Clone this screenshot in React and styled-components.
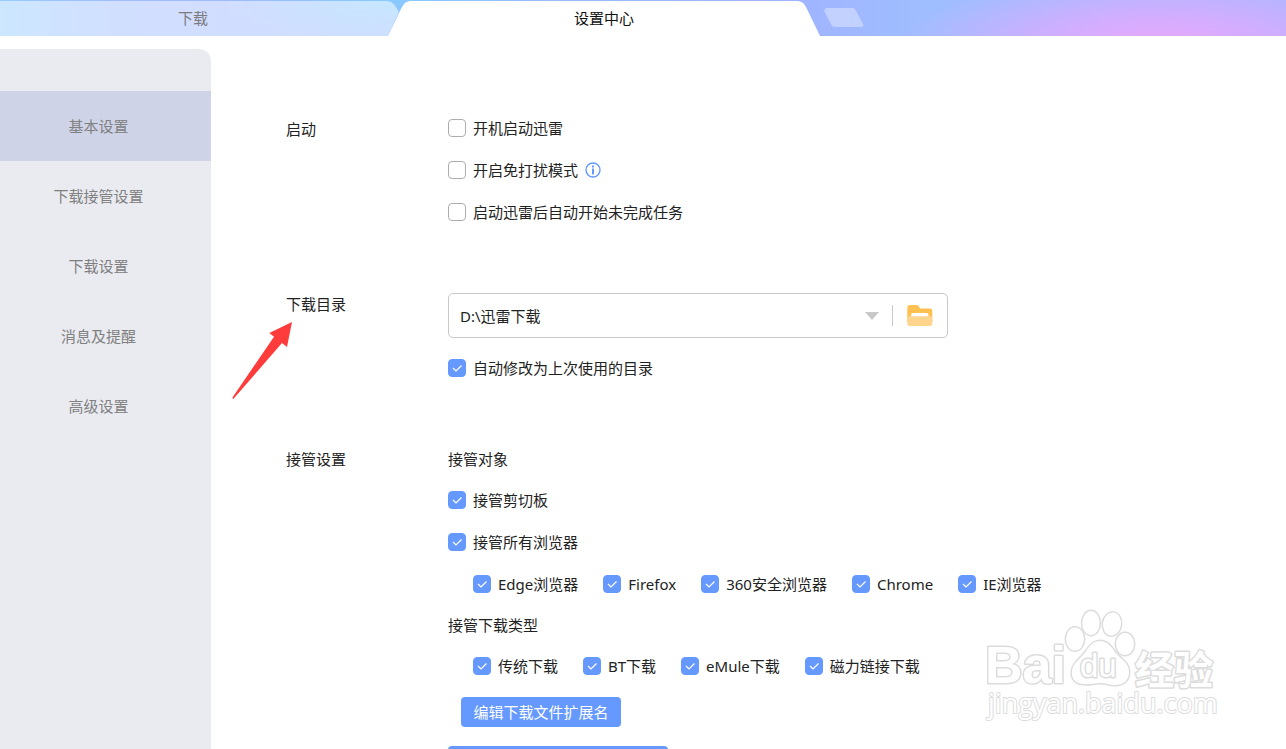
import styled, { createGlobalStyle } from "styled-components"

const sideItems = ['基本设置', '下载接管设置', '下载设置', '消息及提醒', '高级设置']
const browsers = ['Edge浏览器', 'Firefox', '360安全浏览器', 'Chrome', 'IE浏览器']
const downloadTypes = ['传统下载', 'BT下载', 'eMule下载', '磁力链接下载']

const CheckOption = ({ text, checked, children }) => (
    <CheckRow>
        <CheckLabel>
            <Checkbox type="checkbox" defaultChecked={checked} />
            {text}
        </CheckLabel>
        {children}
    </CheckRow>
)

const InfoIcon = () => (
    <svg width="16" height="16" viewBox="0 0 16 16" fill="none" stroke="#6699ff">
        <circle cx="8" cy="8" r="7" strokeWidth="1.4" />
        <path d="M8 6.600V12.400" strokeWidth="2" />
        <path d="M8 3.400V5.400" strokeWidth="2" />
    </svg>
)

const FolderIcon = () => (
    <svg width="26" height="22" viewBox="0 0 26 22">
        <path d="M3 0H9.500Q11 0 11.700 1.200L13.200 3.600H23Q25.300 3.600 25.300 6.200V17H0.300V3Q0.300 0 3 0Z" fill="#ffc052" />
        <path d="M4 14V10Q4 8 6 8H19.500Q21.500 8 21.500 10V14Z" fill="#fff" />
        <path d="M2.400 11.300H23.400Q25.300 11.300 25.300 13.400V18.600Q25.300 21 22.700 21H3.100Q0.300 21 0.300 18.600V13.400Q0.300 11.300 2.400 11.300Z" fill="#ffd48c" />
    </svg>
)

const Watermark = () => (
    <WatermarkBox viewBox="0 0 240 120" aria-hidden="true">
        <g fill="#fff" stroke="#dcdcdc" strokeWidth="3" paintOrder="stroke" strokeLinejoin="round">
            <text x="4" y="78" fontSize="52" fontWeight="700" fontFamily="Liberation Sans, sans-serif">Bai</text>
            <ellipse cx="94" cy="34" rx="9" ry="11.500" />
            <ellipse cx="110" cy="18" rx="8.700" ry="12" />
            <ellipse cx="131" cy="19" rx="9" ry="11.500" transform="rotate(8 131 19)" />
            <ellipse cx="144" cy="39" rx="9" ry="11" />
            <path d="M119 36C126 36 130 41 134 47C139 54 148 57 148 67C148 76 142 80 134 80C128 80 125 78 119 78C113 78 109 80 103 79C95 79 90 74 91 66C92 57 101 53 105 46C109 40 113 36 119 36Z" />
            <text x="99" y="72" fontSize="33" fontFamily="Liberation Sans, sans-serif">du</text>
            <text x="154" y="79" fontSize="39" fontWeight="700" fontFamily="Noto Sans CJK SC, sans-serif">经验</text>
            <text x="7" y="108" fontSize="27" strokeWidth="2" fontFamily="Open Sans, sans-serif">jingyan.baidu.com</text>
        </g>
    </WatermarkBox>
)

const App = () => {
    return (
        <Page>
            <GlobalStyle />
            <TabBar>
                <Tab>下载</Tab>
                <ActiveTab>设置中心</ActiveTab>
                <NewTab aria-label="新建标签">
                    <svg width="40" height="20" viewBox="0 0 40 20">
                        <path d="M3 0H28.500Q30.500 0 31.500 1.700L39 16Q40 19 37 19H10.500Q8.500 19 7.500 17.300L0.500 3.500Q-0.500 0.500 3 0Z" fill="#fff" fillOpacity="0.36" />
                    </svg>
                </NewTab>
            </TabBar>
            <Body>
                <Sidebar>
                    {sideItems.map((item, i) => (
                        <SideLink key={item} href="#" $active={i === 0}>{item}</SideLink>
                    ))}
                </Sidebar>
                <Content>
                    <Section>
                        <SectionTitle $height={44}>启动</SectionTitle>
                        <div>
                            <CheckOption text="开机启动迅雷" />
                            <CheckOption text="开启免打扰模式"><InfoIcon /></CheckOption>
                            <CheckOption text="启动迅雷后自动开始未完成任务" />
                        </div>
                    </Section>
                    <Section $gap={60}>
                        <SectionTitle $height={22}>下载目录</SectionTitle>
                        <div>
                            <PathField>
                                <PathSelect aria-label="下载目录">
                                    <option>D:\迅雷下载</option>
                                </PathSelect>
                                <Divider />
                                <FolderButton aria-label="选择目录"><FolderIcon /></FolderButton>
                            </PathField>
                            <CheckOption text="自动修改为上次使用的目录" checked />
                        </div>
                        <Pointer viewBox="0 0 62 78">
                            <path d="M60 0L37.300 11L42 14.700L0.300 75.700L1.300 77L50 21L55 25Z" fill="#ff3b3b" />
                        </Pointer>
                    </Section>
                    <Section $gap={50}>
                        <SectionTitle $height={40}>接管设置</SectionTitle>
                        <div>
                            <GroupTitle>接管对象</GroupTitle>
                            <CheckOption text="接管剪切板" checked />
                            <CheckOption text="接管所有浏览器" checked />
                            <OptionGroup>
                                {browsers.map(name => <CheckOption key={name} text={name} checked />)}
                            </OptionGroup>
                            <GroupTitle>接管下载类型</GroupTitle>
                            <OptionGroup>
                                {downloadTypes.map(name => <CheckOption key={name} text={name} checked />)}
                            </OptionGroup>
                            <Actions>
                                <ExtButton>编辑下载文件扩展名</ExtButton>
                                <WideButton aria-label="更多接管设置" />
                            </Actions>
                        </div>
                    </Section>
                </Content>
            </Body>
            <Watermark />
        </Page>
    )
}

export default App

const GlobalStyle = createGlobalStyle`
    body {
        margin: 0;
        background: #fff;
    }

    * {
        box-sizing: border-box;
    }

    body, button, select {
        font-family: "Noto Sans", "Noto Sans CJK SC", sans-serif;
        font-size: 15px;
        font-weight: 400;
        line-height: 20px;
        color: #222;
    }

    button {
        border: none;
        padding: 0;
        background: none;
        cursor: pointer;
    }
`

const Page = styled.div`
    height: 100vh;
    display: flex;
    flex-direction: column;
    overflow: hidden;
    position: relative;
`

const TabBar = styled.header`
    flex: none;
    height: 36px;
    display: flex;
    align-items: flex-start;
    background:
        radial-gradient(ellipse 260px 70px at 1160px 44px, #e6a8fc 0%, rgba(222, 170, 255, 0.8) 40%, rgba(200, 178, 255, 0) 100%),
        radial-gradient(ellipse 170px 44px at 390px 0px, #88caff 0%, rgba(140, 200, 255, 0) 100%),
        linear-gradient(90deg, #96ccff 0px, #a0bcff 120px, #a0b8ff 260px, #9cbcff 400px, #98bcff 600px, #a0b4ff 800px, #9fbeff 930px, #a8b8ff 1286px);
`

const Tab = styled.button`
    width: 400px;
    height: 36px;
    && {
        padding-right: 14px;
        color: #7c7c80;
        background: rgba(255, 255, 255, 0.52);
    }
    clip-path: path("M0 1H386C394 1 395 6 399 12L388 36H0Z");
`

const ActiveTab = styled.button`
    width: 432px;
    height: 36px;
    margin-left: -12px;
    && {
        background: #fff;
        color: #111;
    }
    clip-path: path("M0 36L13 9C16 3 18 1 24 1H408C414 1 416 3 419 9L432 36Z");
`

const NewTab = styled.button`
    margin: 8px 0 0 4px;
    display: flex;
`

const Body = styled.div`
    flex: 1;
    min-height: 0;
    display: flex;
`

const Sidebar = styled.nav`
    flex: none;
    width: 211px;
    margin-top: 13px;
    padding-top: 42px;
    border-radius: 0 12px 0 0;
    background: #eaebf1;
`

const SideLink = styled.a`
    height: 70px;
    padding-right: 14px;
    display: flex;
    align-items: center;
    justify-content: center;
    color: #808080;
    text-decoration: none;
    background: ${props => props.$active ? '#cfd3e7' : 'transparent'};
`

const Content = styled.main`
    flex: 1;
    padding: 71px 75px 0;
    overflow-y: auto;
    scrollbar-width: none;
`

const Section = styled.section`
    position: relative;
    display: grid;
    grid-template-columns: 162px 1fr;
    align-items: start;
    margin-top: ${props => props.$gap || 0}px;
`

const SectionTitle = styled.h2`
    margin: 0;
    font-size: 15px;
    font-weight: 400;
    line-height: ${props => props.$height}px;
`

const GroupTitle = styled.div`
    line-height: 40px;
`

const CheckRow = styled.div`
    height: 42px;
    display: flex;
    align-items: center;
    gap: 7px;
`

const CheckLabel = styled.label`
    display: flex;
    align-items: center;
    gap: 7px;
    white-space: nowrap;
`

const Checkbox = styled.input`
    appearance: none;
    flex: none;
    width: 18px;
    height: 18px;
    margin: 0;
    border: 1px solid #adadad;
    border-radius: 4px;
    background: #fff;

    &:checked {
        border-color: #6699ff;
        background: #6699ff url("data:image/svg+xml,%3Csvg xmlns='http://www.w3.org/2000/svg' viewBox='0 0 16 16'%3E%3Cpath d='M4 8l3 3 5.500-5.500' fill='none' stroke='white' stroke-width='1.2'/%3E%3C/svg%3E") center / 16px no-repeat;
    }
`

const OptionGroup = styled.div`
    display: flex;
    gap: 25px;
    margin-left: 25px;
`

const PathField = styled.div`
    width: 500px;
    height: 45px;
    margin-bottom: 9px;
    display: flex;
    align-items: center;
    border: 1px solid #c8c8c8;
    border-radius: 5px;
`

const PathSelect = styled.select`
    appearance: none;
    flex: 1;
    height: 43px;
    padding: 0 40px 0 11px;
    border: none;
    outline: none;
    background: url("data:image/svg+xml,%3Csvg xmlns='http://www.w3.org/2000/svg' viewBox='0 0 14 8'%3E%3Cpath d='M0 0h14L7 8z' fill='%23c8c8c8'/%3E%3C/svg%3E") right 13px center / 14px 8px no-repeat;
`

const Divider = styled.span`
    width: 1px;
    height: 21px;
    background: #c8c8c8;
`

const FolderButton = styled.button`
    && {
        padding: 0 14px;
    }
    display: flex;
`

const Actions = styled.div`
    display: flex;
    flex-direction: column;
    align-items: flex-start;
    gap: 19px;
    padding-top: 10px;
`

const ExtButton = styled.button`
    width: 160px;
    height: 30px;
    margin-left: 13px;
    border-radius: 4px;
    && {
        background: #6699ff;
        color: #fff;
    }
`

const WideButton = styled.button`
    width: 220px;
    height: 30px;
    border-radius: 4px;
    && {
        background: #6699ff;
    }
`

/* red arrow lying over the settings, aimed at the directory title */
const Pointer = styled.svg`
    position: absolute;
    left: -54px;
    top: 29px;
    width: 62px;
    height: 78px;
    pointer-events: none;
`

const WatermarkBox = styled.svg`
    position: absolute;
    right: 65px;
    bottom: 24px;
    width: 240px;
    height: 120px;
    pointer-events: none;
`
